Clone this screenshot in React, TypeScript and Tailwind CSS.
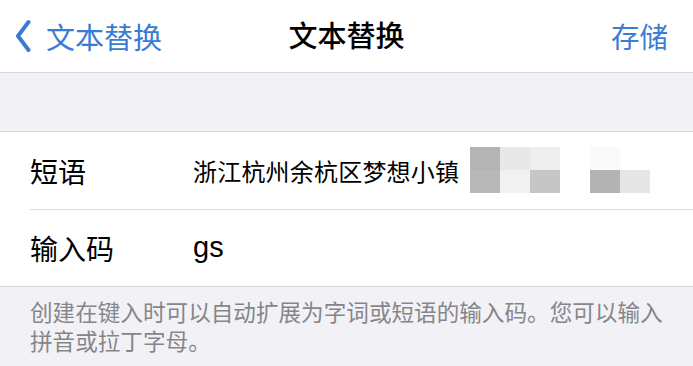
import React from "react";

const font = { fontFamily: '"Noto Sans CJK SC", "Noto Sans", sans-serif' };

export default function App() {
  return (
    <div
      className="w-[693px] h-[366px] overflow-hidden bg-[#f2f2f6] flex flex-col"
      style={font}
    >
      {/* nav bar */}
      <div className="h-[73px] bg-white border-b border-[#d8d8dc] flex items-center relative shrink-0">
        <div className="flex items-center pl-[15px] text-[#3a7bd5]">
          <svg width="16" height="34" viewBox="0 0 16 34" className="mr-[15px]">
            <path
              d="M13.5 3 L3 17 L13.5 31"
              fill="none"
              stroke="#3a7bd5"
              strokeWidth="4"
              strokeLinecap="round"
              strokeLinejoin="round"
            />
          </svg>
          <span className="text-[29px] leading-none">文本替换</span>
        </div>
        <div className="absolute left-0 right-0 text-center pointer-events-none">
          <span className="text-[29px] leading-none text-black font-medium">文本替换</span>
        </div>
        <div className="ml-auto pr-[25px] text-[28.5px] leading-none text-[#3a7bd5]">存储</div>
      </div>

      {/* grey spacer */}
      <div className="h-[59px] border-b border-[#d8d8dc] shrink-0" />

      {/* group */}
      <div className="bg-white border-b border-[#d8d8dc] shrink-0">
        <div className="h-[78px] flex items-center pl-[30px] relative">
          <span className="w-[163px] text-[28px] leading-none text-black">短语</span>
          <span className="text-[24px] leading-none text-black tracking-[0.2px]">浙江杭州余杭区梦想小镇</span>
          <div className="absolute top-[15px] left-[470px] grid grid-cols-[30px_30px_30px] grid-rows-[23px_23px]">
            <div className="bg-[#b4b4b4]" />
            <div className="bg-[#e8e8e8]" />
            <div className="bg-[#eeeeee]" />
            <div className="bg-[#b8b8b8]" />
            <div className="bg-[#f2f2f2]" />
            <div className="bg-[#c6c6c6]" />
          </div>
          <div className="absolute top-[15px] left-[590px] grid grid-cols-[30px_30px] grid-rows-[23px_23px]">
            <div className="bg-[#fafafa]" />
            <div className="bg-white" />
            <div className="bg-[#b3b3b3]" />
            <div className="bg-[#e6e6e6]" />
          </div>
          <div className="absolute bottom-0 left-[30px] right-0 h-px bg-[#dcdce0]" />
        </div>
        <div className="h-[76px] flex items-center pl-[30px]">
          <span className="w-[163px] text-[28px] leading-none text-black">输入码</span>
          <span
            className="text-[29px] leading-none text-black -mt-[2px]"
            style={{ fontFamily: '"Liberation Sans", Arial, sans-serif' }}
          >
            gs
          </span>
        </div>
      </div>

      {/* footer */}
      <div className="pt-[12px] pl-[30px] text-[22.6px] leading-[26px] text-[#86868a] whitespace-nowrap flex flex-col gap-[3px]">
        <div>创建在键入时可以自动扩展为字词或短语的输入码。您可以输入</div>
        <div>拼音或拉丁字母。</div>
      </div>
    </div>
  );
}
